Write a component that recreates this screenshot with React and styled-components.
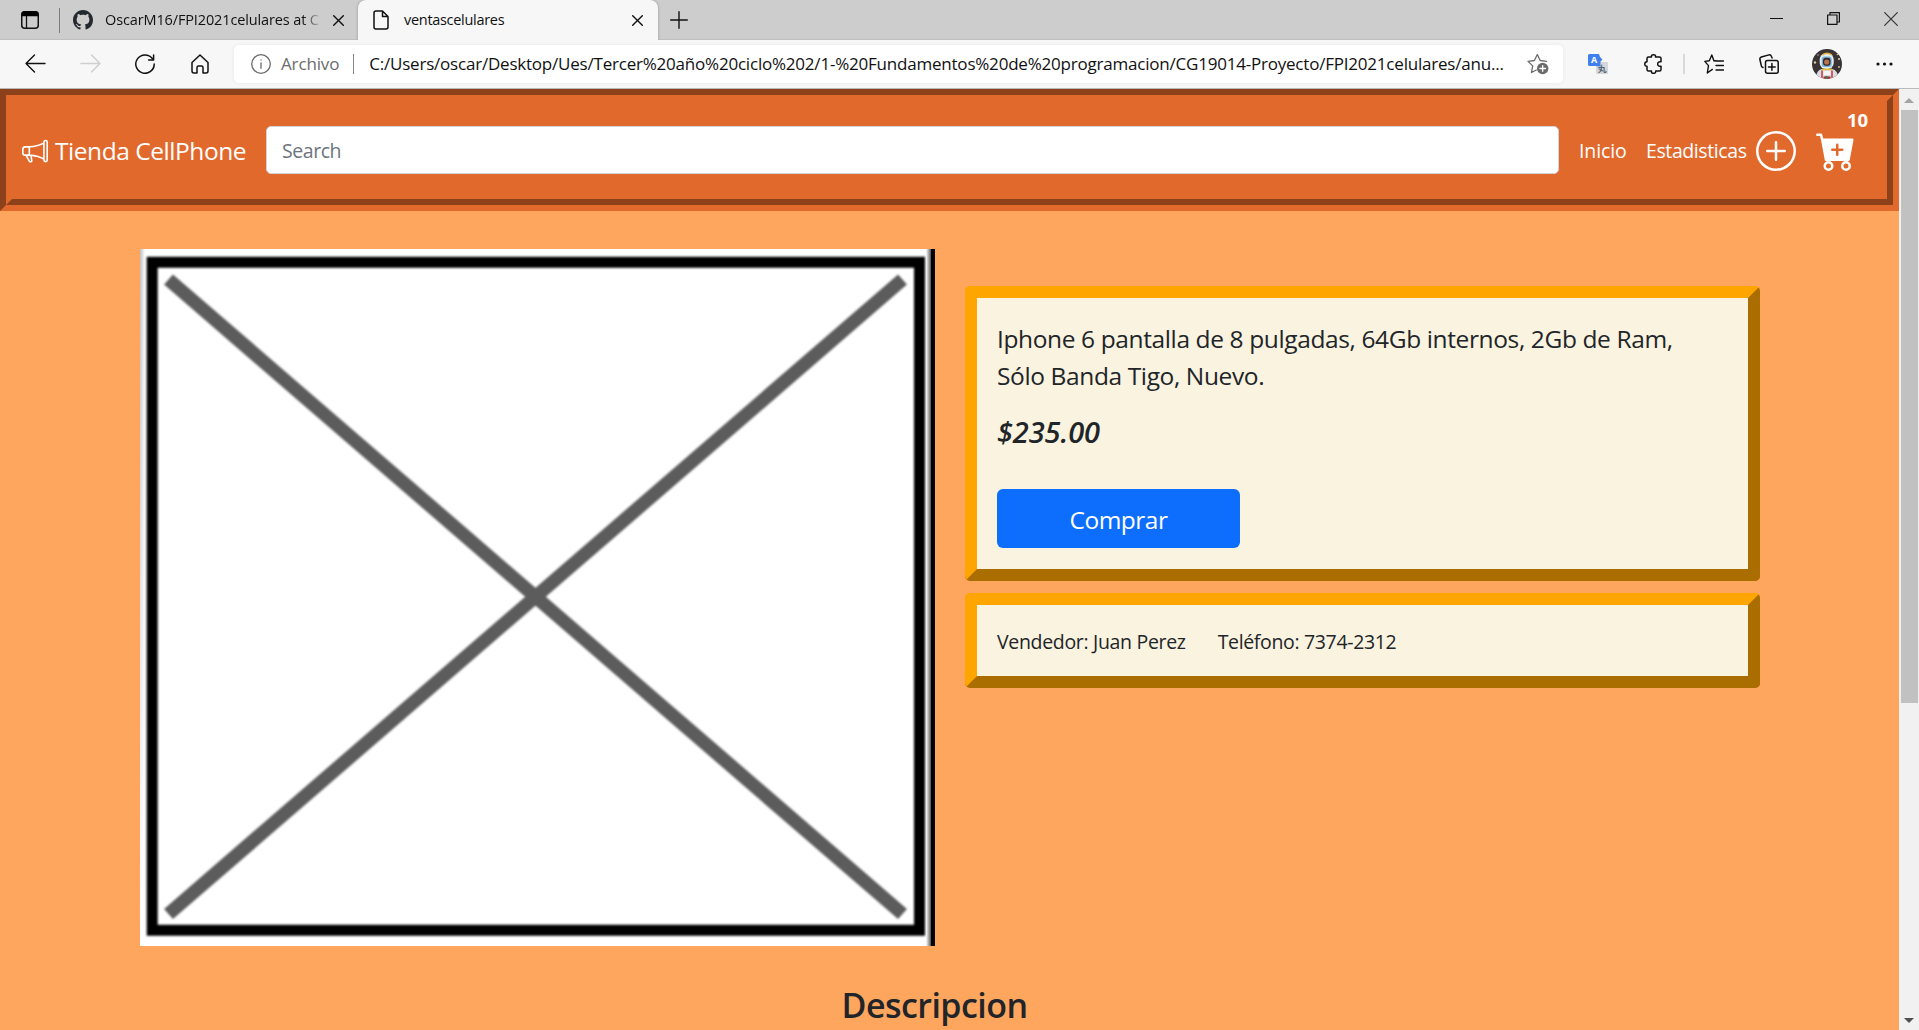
import React from "react";
import styled, { createGlobalStyle } from "styled-components";
import { BsMegaphone, BsPlusCircle, BsCartPlusFill } from "react-icons/bs";

const GlobalStyle = createGlobalStyle`
  * { box-sizing: border-box; }
  body {
    margin: 0;
    overflow: hidden;
    background: #ffa65e;
    color: #212529;
    font-family: "Open Sans", "Noto Sans", sans-serif;
  }
  svg { display: block; flex: none; }
`;

/* ---------- shared ---------- */

const Text = styled.span`
  white-space: nowrap;
  font-size: ${(p) => p.$size}px;
  line-height: ${(p) => p.$line || 30}px;
  letter-spacing: ${(p) => p.$track || 0}px;
  color: ${(p) => p.$color || "inherit"};
`;

const Slot = styled.div`
  flex: none;
  display: flex;
  align-items: center;
  margin-left: ${(p) => p.$gap || 0}px;
`;

const Divider = styled.div`
  flex: none;
  width: ${(p) => p.$width || 1}px;
  height: ${(p) => p.$height}px;
  margin-left: ${(p) => p.$gap}px;
  background: ${(p) => p.$color};
`;

const Window = styled.div`
  width: 1919px;
  height: 1030px;
  display: flex;
  flex-direction: column;
  overflow: hidden;
`;

/* ---------- browser chrome ---------- */

const TabBar = styled.div`
  flex: none;
  height: 40px;
  display: flex;
  background: #cdcdcd;
  box-shadow: inset 0 -1px 0 #bfbfbf;
`;

const TabActions = styled.div`
  width: 60px;
  display: flex;
  align-items: center;
  padding-left: 21px;
`;

const Tab = styled.div`
  width: ${(p) => p.$width}px;
  height: 40px;
  display: flex;
  align-items: center;
  padding-left: ${(p) => p.$pad}px;
  background: ${(p) => (p.$active ? "#f7f7f7" : "transparent")};
  border-radius: 8px 8px 0 0;
  box-shadow: ${(p) => (p.$active ? "0 0 3px rgba(0,0,0,.28)" : "none")};
  clip-path: inset(0 -4px 0 -4px);
`;

const TabTitle = styled(Text)`
  width: ${(p) => p.$width}px;
  margin-left: ${(p) => p.$gap}px;
  color: #111;
  mask-image: ${(p) => (p.$fade ? "linear-gradient(90deg,#000 91%,transparent)" : "none")};
`;

const WindowButtons = styled.div`
  margin-left: auto;
  padding: 12px 21px 0 0;
  display: flex;
  gap: 44px;
`;

const Toolbar = styled.div`
  flex: none;
  height: 49px;
  display: flex;
  align-items: center;
  padding: 0 0 1px 25px;
  background: #f7f7f7;
  border-bottom: 1px solid #b9b9b9;
`;

const AddressBar = styled.div`
  flex: none;
  width: 1329px;
  height: 38px;
  margin-left: 25px;
  padding-left: 17px;
  display: flex;
  align-items: center;
  background: #fff;
  border-radius: 5px;
  box-shadow: 0 0 4px rgba(0, 0, 0, 0.07);
`;

const Url = styled(Text)`
  width: 1158px;
  margin-left: 15px;
  color: #111;
`;

/* ---------- page ---------- */

const Viewport = styled.div`
  flex: 1;
  min-height: 0;
  display: flex;
`;

const Page = styled.div`
  flex: 1;
  overflow: hidden;
  background: #ffa65e;
`;

const Navbar = styled.nav`
  height: 122px;
  display: flex;
  color: #fff;
  background: #e2692c;
  border: 6px solid;
  border-color: #8d411b #e2692c #e2692c #8d411b;
`;

const NavInner = styled.div`
  flex: 1;
  display: flex;
  align-items: center;
  padding-left: 10px;
  border: 6px solid;
  border-color: #e2692c #8d411b #8d411b #e2692c;
`;

const Brand = styled.div`
  width: 238px;
  padding-top: 2px;
  display: flex;
  align-items: center;
  gap: 7px;
`;

const SearchBox = styled.div`
  width: 1293px;
  height: 48px;
  margin-left: 6px;
  padding: 2px 0 0 15px;
  display: flex;
  align-items: center;
  background: #fff;
  border: 1px solid #ced4da;
  border-radius: 5px;
`;

const NavLink = styled(Text)`
  margin-left: ${(p) => p.$gap}px;
  padding-top: 2px;
  width: ${(p) => p.$width}px;
`;

const IconButton = styled.div`
  position: relative;
  padding-top: 2px;
  margin-left: ${(p) => p.$gap}px;
`;

const CartCount = styled.span`
  position: absolute;
  left: 31px;
  top: -22px;
  font-size: 18.5px;
  font-weight: 700;
  line-height: 26px;
`;

const Content = styled.main`
  display: grid;
  grid-template-columns: 795px 795px;
  column-gap: 30px;
  padding: 38px 0 0 140px;
`;

const Details = styled.div`
  display: flex;
  flex-direction: column;
  gap: 12px;
  padding-top: 37px;
`;

const Card = styled.section`
  height: ${(p) => p.$height}px;
  padding: ${(p) => p.$pad};
  background: #faf3df;
  border: 12px solid;
  border-color: #ffa500 #aa6e00 #aa6e00 #ffa500;
  border-radius: 5px;
`;

const ProductTitle = styled.p`
  margin: 0;
  font-size: 24.5px;
  line-height: 37px;
  letter-spacing: -0.38px;
`;

const Price = styled.p`
  margin: 20px 0 0;
  font-size: 29px;
  font-weight: 600;
  font-style: italic;
  line-height: 36px;
  letter-spacing: -0.1px;
`;

const BuyButton = styled.button`
  display: block;
  width: 243px;
  height: 59px;
  margin-top: 39px;
  padding: 2px 0 0;
  border: 0;
  border-radius: 6px;
  background: #0d6efd;
  color: #fff;
  font: 400 24.5px "Open Sans", sans-serif;
  letter-spacing: -0.5px;
`;

const Seller = styled.div`
  display: flex;
  gap: 32px;
`;

const Section = styled.div`
  width: 1899px;
`;

const Heading = styled.h2`
  margin: 36px 30px 0 0;
  text-align: center;
  font-size: 34px;
  font-weight: 600;
  line-height: 46px;
  letter-spacing: -0.55px;
`;

/* ---------- scrollbar ---------- */

const ScrollTrack = styled.div`
  flex: none;
  width: 20px;
  display: flex;
  flex-direction: column;
  align-items: center;
  background: #f1f1f1;
  padding: 9px 0 7px;
`;

const ScrollThumb = styled.div`
  width: 17px;
  height: 593px;
  margin: 7px 0 auto 1px;
  background: #c1c1c1;
`;

/* ---------- drawings ---------- */

const Stroke = ({ w, h, children, color = "#111", sw = 1.4 }) => (
  <svg width={w} height={h} viewBox={`0 0 ${w} ${h}`} fill="none" stroke={color} strokeWidth={sw} strokeLinecap="round" strokeLinejoin="round">
    {children}
  </svg>
);

const CloseIcon = ({ s = 11, sw = 1.4, color }) => (
  <Stroke w={s} h={s} sw={sw} color={color}>
    <path d={`M.7.7 ${s - 0.7} ${s - 0.7}M${s - 0.7} .7.7 ${s - 0.7}`} />
  </Stroke>
);

const TabsIcon = () => (
  <svg width="18" height="18" viewBox="0 0 18 18">
    <rect x=".75" y=".75" width="16.5" height="16.5" rx="3" fill="none" stroke="#111" strokeWidth="1.5" />
    <path d="M.5 5.2V3Q.5.3 3 .3h12q2.5 0 2.5 2.7v2.2z" fill="#000" />
    <path d="M5.5 5v12" stroke="#111" strokeWidth="1.3" />
  </svg>
);

const GithubLogo = () => (
  <svg width="20" height="20" viewBox="0 0 16 16" fill="#24292f">
    <path d="M8 0C3.58 0 0 3.58 0 8c0 3.54 2.29 6.53 5.47 7.59.4.07.55-.17.55-.38 0-.19-.01-.82-.01-1.49-2.01.37-2.53-.49-2.69-.94-.09-.23-.48-.94-.82-1.13-.28-.15-.68-.52-.01-.53.63-.01 1.08.58 1.23.82.72 1.21 1.87.87 2.33.66.07-.52.28-.87.51-1.07-1.78-.2-3.64-.89-3.64-3.95 0-.87.31-1.59.82-2.15-.08-.2-.36-1.02.08-2.12 0 0 .67-.21 2.2.82.64-.18 1.32-.27 2-.27s1.36.09 2 .27c1.53-1.04 2.2-.82 2.2-.82.44 1.1.16 1.92.08 2.12.51.56.82 1.27.82 2.15 0 3.07-1.87 3.75-3.65 3.95.29.25.54.73.54 1.48 0 1.07-.01 1.93-.01 2.2 0 .21.15.46.55.38A8.01 8.01 0 0 0 16 8c0-4.42-3.58-8-8-8" />
  </svg>
);

const FavoriteAdd = () => (
  <svg width="22" height="22" viewBox="0 0 22 22" fill="none" stroke="#6b6b6b" strokeWidth="1.3" strokeLinejoin="round" strokeLinecap="round">
    <path d="M19.5 8.4 13.2 7.5 10.3 1.5 7.4 7.5 1 8.4l4.7 4.5L4.5 19.5l4.8-2.5" />
    <circle cx="15.7" cy="15.5" r="5.7" fill="#6b6b6b" stroke="none" />
    <path d="M15.7 12.7v5.6M12.9 15.5h5.6" stroke="#fff" />
  </svg>
);

const TranslateIcon = () => (
  <svg width="20" height="20" viewBox="0 0 20 20">
    <rect x="8" y="8" width="12" height="12" rx="1" fill="#d5d7da" />
    <path d="M1.5 0H11l1 3 2.5 2.500-2 2V12H1.500Q0 12 0 10.500v-9Q0 0 1.500 0Z" fill="#3f7fee" />
    <path d="m9 12 2 5 2-5z" fill="#9fb8e3" />
    <text x="6" y="9.300" textAnchor="middle" fontFamily="Open Sans" fontWeight="700" fontSize="9" fill="#fff">A</text>
    <text x="14.300" y="18" textAnchor="middle" fontFamily="Noto Sans CJK JP" fontSize="8.500" fontWeight="700" fill="#4f6470">丸</text>
  </svg>
);

const Avatar = () => (
  <svg width="30" height="30" viewBox="0 0 30 30">
    <defs><clipPath id="face"><circle cx="15" cy="15" r="15" /></clipPath></defs>
    <g clipPath="url(#face)">
      <rect width="30" height="30" fill="#393433" />
      <g fill="#d9c9a3"><circle cx="3" cy="13.5" r="1.2" /><circle cx="6" cy="6" r=".7" /><circle cx="25.5" cy="5.5" r=".8" /><circle cx="27" cy="10" r="1.1" /><circle cx="27" cy="18" r=".9" /></g>
      <path d="M4 30q0-9 6-10h10q6 1 6.5 10z" fill="#d8dce4" />
      <rect x="7.7" y="4.5" width="14" height="15.5" rx="6" fill="#e6edf2" />
      <path d="M10 6q5-3.5 10 0" stroke="#e0b23a" strokeWidth="1.5" fill="none" />
      <rect x="9.7" y="7.5" width="10" height="10.5" rx="2.5" fill="#76b4dd" />
      <rect x="11" y="8.7" width="7.5" height="8" rx="3" fill="#38251f" />
      <circle cx="14.7" cy="13" r="2.6" fill="#b9744f" />
      <path d="M10 20.3h10" stroke="#e3b93c" strokeWidth="1.7" />
      <path d="M10 21.5v8M20 21.5v8" stroke="#d5313a" strokeWidth="1.5" />
      <rect x="11.5" y="22" width="7" height="4" fill="#f5f5f5" />
      <path d="M11.5 27.5h7v3h-7z" fill="#b32430" />
      <path d="M13.5 27h2v3h-2z" fill="#308657" />
    </g>
  </svg>
);

const ScrollArrow = ({ down, color }) => (
  <svg width="10" height="5" viewBox="0 0 10 5" fill={color}>
    <path d={down ? "M0 0h10L5 5z" : "M5 0l5 5H0z"} />
  </svg>
);

const PlaceholderPicture = () => (
  <svg width="795" height="697" viewBox="0 0 795 697">
    <defs>
      <filter id="soft" x="-2%" y="-2%" width="104%" height="104%"><feGaussianBlur stdDeviation=".9" /></filter>
      <linearGradient id="edge"><stop offset="0" stopColor="#fff" /><stop offset=".7" stopColor="#777" /><stop offset="1" stopColor="#000" /></linearGradient>
      <linearGradient id="left"><stop offset="0" stopColor="#bdbdbd" /><stop offset="1" stopColor="#fff" /></linearGradient>
      <linearGradient id="fade" x2="0" y2="1"><stop offset="0" stopColor="#fff" stopOpacity="0" /><stop offset="1" stopColor="#fff" /></linearGradient>
    </defs>
    <rect width="795" height="697" fill="#fff" />
    <rect width="5" height="697" fill="url(#left)" />
    <rect width="5" height="697" fill="url(#fade)" />
    <g filter="url(#soft)" fill="none">
      <path d="M12.2 13.2H779.5V681.2H12.2Z" stroke="#000" strokeWidth="11" />
      <path d="M28.5 30.5 762.5 665M762.5 30.5 28.5 665" stroke="#5b5b5d" strokeWidth="13.5" />
    </g>
    <rect x="786" width="6" height="697" fill="url(#edge)" />
    <rect x="791" width="4" height="697" fill="#000" />
  </svg>
);

const URL_TEXT =
  "C:/Users/oscar/Desktop/Ues/Tercer%20año%20ciclo%202/1-%20Fundamentos%20de%20programacion/CG19014-Proyecto/FPI2021celulares/anu...";

export default function App() {
  return (
    <Window>
      <GlobalStyle />
      <TabBar>
        <TabActions><TabsIcon /><Divider $gap={20} $height={25} $color="#7d7d7d" /></TabActions>
        <Tab $width={298} $pad={13}>
          <GithubLogo />
          <TabTitle $size={14.5} $track={-0.13} $gap={12} $width={217} $fade>OscarM16/FPI2021celulares at C</TabTitle>
          <Slot $gap={11}><CloseIcon /></Slot>
        </Tab>
        <Tab $width={300} $pad={15} $active>
          <Stroke w={16} h={20} sw={1.5}>
            <path d="M1 3Q1 1 3 1h6.500L15 6.500V17q0 2-2 2H3q-2 0-2-2zM9.500 1v5.500H15" />
          </Stroke>
          <TabTitle $size={14.5} $track={-0.3} $gap={15} $width={228}>ventascelulares</TabTitle>
          <CloseIcon />
        </Tab>
        <Slot $gap={12}><Stroke w={18} h={18}><path d="M9 .7v16.600M.7 9h16.600" /></Stroke></Slot>
        <WindowButtons>
          <Stroke w={13} h={13} sw={1.2}><path d="M.5 6.500h12" /></Stroke>
          <Stroke w={13} h={13} sw={1.2}><path d="M.6 3h9.400v9.400H.6zM3 2.800V.6h9.400V10h-2.200" /></Stroke>
          <CloseIcon s={14} sw={1.2} color="#333" />
        </WindowButtons>
      </TabBar>

      <Toolbar>
        <Stroke w={21} h={19}><path d="M20 9.500H1M9.500 1 1 9.500 9.500 18" /></Stroke>
        <Slot $gap={34}><Stroke w={21} h={19} color="#cfcfcf"><path d="M1 9.500h19M11.500 1 20 9.500 11.500 18" /></Stroke></Slot>
        <Slot $gap={34}><Stroke w={20} h={20} sw={1.5}><path d="M17.300 4.500A9.200 9.200 0 1 0 19.200 10M18.600.9v5h-5" /></Stroke></Slot>
        <Slot $gap={36}><Stroke w={18} h={20} sw={1.5}><path d="M1 8.500 9 1l8 7.500V17q0 2-2 2h-3v-5.500q0-1.500-1.500-1.500h-3Q6 12 6 13.500V19H3q-2 0-2-2z" /></Stroke></Slot>
        <AddressBar>
          <Stroke w={20} h={20} color="#6b6b6b" sw={1.3}><circle cx="10" cy="10" r="9.3" /><path d="M10 8.800v5.500M10 5.800v.2" /></Stroke>
          <Slot $gap={10}><Text $size={17} $track={-0.15} $color="#6b6b6b">Archivo</Text></Slot>
          <Divider $gap={14} $height={20} $color="#858585" />
          <Url $size={17} $track={-0.21}>{URL_TEXT}</Url>
          <FavoriteAdd />
        </AddressBar>
        <Slot $gap={25}><TranslateIcon /></Slot>
        <Slot $gap={36}>
          <Stroke w={19} h={20} sw={1.5}>
            <path d="M4.500 3h3q-.5-2.200 2-2.200t2 2.200h4q1.500 0 1.500 1.500v3.300q-3.300-.6-3.300 2.200t3.300 2.200v3.300q0 1.500-1.500 1.500h-3.800q.3 2.300-2.200 2.300T7.500 17h-3Q3 17 3 15.500v-3.200Q.8 12.300.8 10T3 7.700V4.500Q3 3 4.500 3Z" />
          </Stroke>
        </Slot>
        <Divider $gap={20} $height={20} $width={2} $color="#d9d9d9" />
        <Slot $gap={19}>
          <Stroke w={20} h={20}><path d="M11.500 6.700 9.800 6.500 7.800 1 5.300 6.800.8 7.400l3.700 4.200L3.300 19l5-3.600M13 7h6.500M12 11.500h7.500M12 16h7.500M9.800 6.800l3 .2" /></Stroke>
        </Slot>
        <Slot $gap={35}>
          <Stroke w={20} h={20} sw={1.5}>
            <rect x="6.5" y="6.5" width="12.7" height="12.7" rx="2" />
            <path d="M12.900 9.500v6.700M9.500 12.900h6.700M4 13.500Q2.800 13 2.400 12L.9 5.500Q.6 3.600 2.300 3L10 .9q1.800-.3 2.500 1.600l.6 1.500" />
          </Stroke>
        </Slot>
        <Slot $gap={33}><Avatar /></Slot>
        <Slot $gap={34}>
          <svg width="17" height="4" viewBox="0 0 17 4" fill="#111"><circle cx="2" cy="2" r="1.6" /><circle cx="8.5" cy="2" r="1.6" /><circle cx="15" cy="2" r="1.6" /></svg>
        </Slot>
      </Toolbar>

      <Viewport>
        <Page>
          <Navbar>
            <NavInner>
              <Brand>
                <BsMegaphone size={26} />
                <Text $size={24.5} $track={-0.45}>Tienda CellPhone</Text>
              </Brand>
              <SearchBox><Text $size={19.5} $track={-0.45} $color="#6c757d">Search</Text></SearchBox>
              <NavLink $size={19.5} $track={-0.1} $gap={20} $width={47}>Inicio</NavLink>
              <NavLink $size={19.5} $track={-0.4} $gap={20} $width={100}>Estadisticas</NavLink>
              <IconButton $gap={10}><BsPlusCircle size={40} /></IconButton>
              <IconButton $gap={20}>
                <BsCartPlusFill size={40} />
                <CartCount>10</CartCount>
              </IconButton>
            </NavInner>
          </Navbar>
          <Content>
            <PlaceholderPicture />
            <Details>
              <Card $height={295} $pad="22px 20px 0">
                <ProductTitle>
                  Iphone 6 pantalla de 8 pulgadas, 64Gb internos, 2Gb de Ram,<br />Sólo Banda Tigo, Nuevo.
                </ProductTitle>
                <Price>$235.00</Price>
                <BuyButton>Comprar</BuyButton>
              </Card>
              <Card $height={95} $pad="22px 20px 0">
                <Seller>
                  <Text $size={19.5} $track={-0.32}>Vendedor: Juan Perez</Text>
                  <Text $size={19.5} $track={-0.34}>Teléfono: 7374-2312</Text>
                </Seller>
              </Card>
            </Details>
          </Content>
          <Section><Heading>Descripcion</Heading></Section>
        </Page>
        <ScrollTrack>
          <ScrollArrow color="#a3a3a3" />
          <ScrollThumb />
          <ScrollArrow down color="#505050" />
        </ScrollTrack>
      </Viewport>
    </Window>
  );
}
